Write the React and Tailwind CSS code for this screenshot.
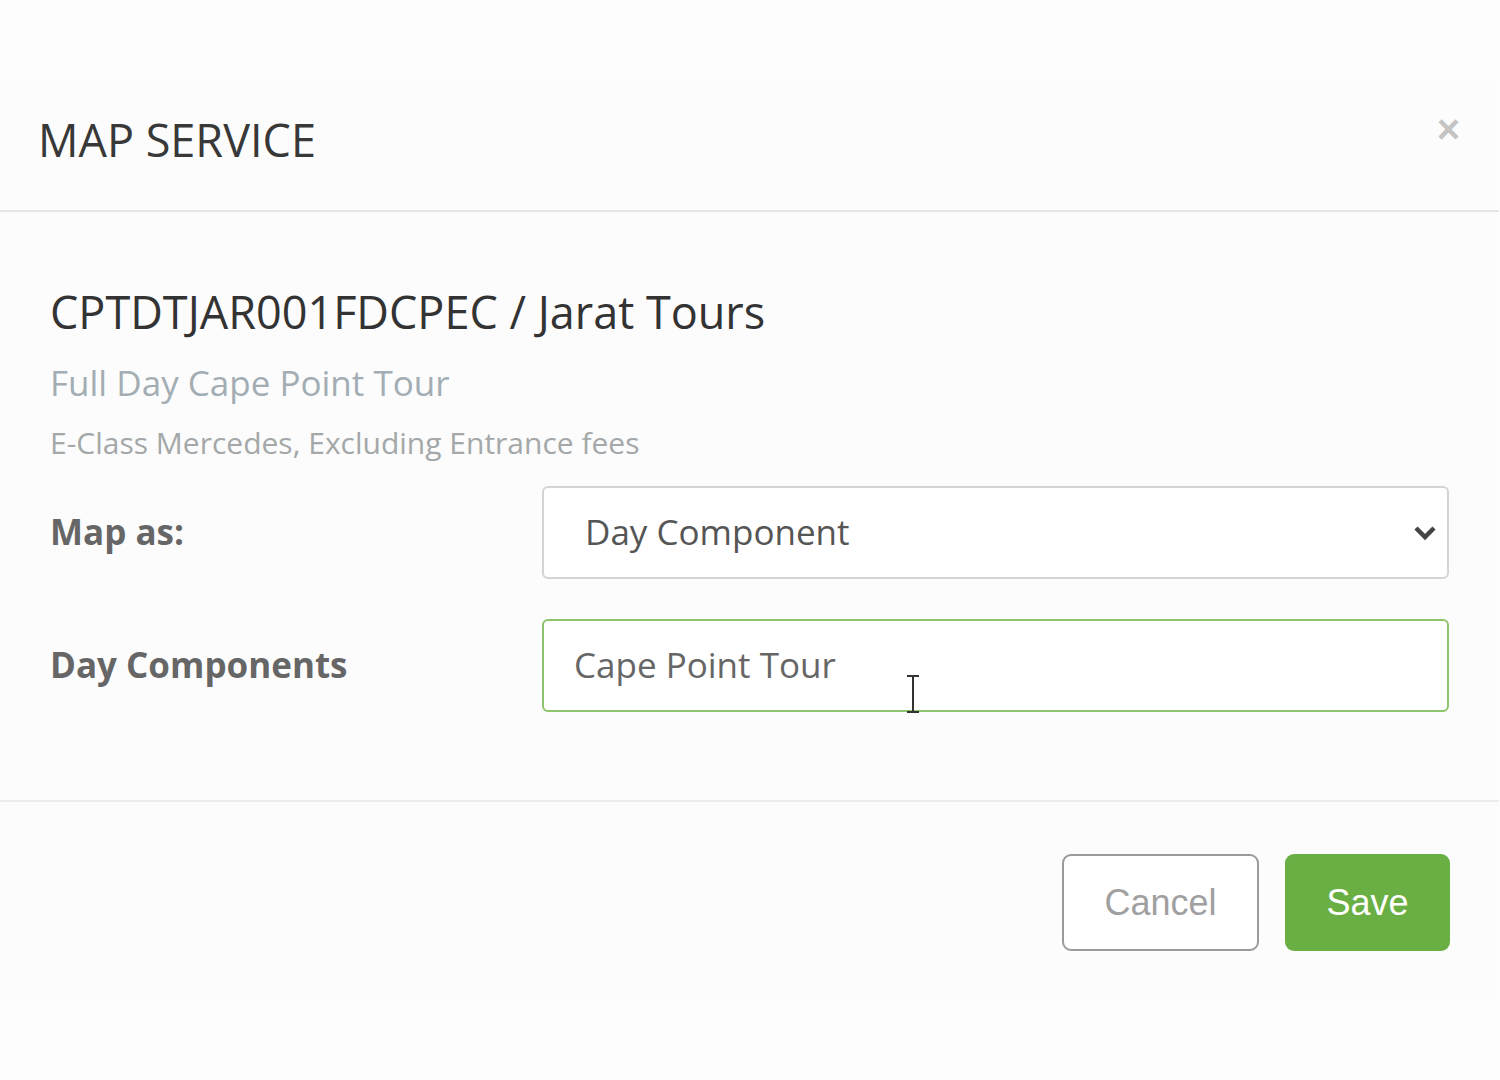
import React from 'react';

const openSans = { fontFamily: '"Open Sans", "Noto Sans", sans-serif' };

const MapServiceModal = () => {
  return (
    <div className='w-[1499px] bg-[#fcfcfc]' style={openSans}>
      <div className='h-[128px] border-b-2 border-[#e6e6e6] flex items-start justify-between pl-[38px] pr-[39px]'>
        <h2 className='pt-[33px] text-[45px] leading-none text-[#383838]'>MAP SERVICE</h2>
        <button className='pt-[25px] text-[40px] leading-none text-[#c4c4c4] font-bold' style={{ fontFamily: '"Liberation Sans", Arial, sans-serif' }}>×</button>
      </div>

      <div className='h-[590px] border-b-2 border-[#ececec] pl-[50px] pr-[50px] pt-[77px]'>
        <h3 className='text-[45px] leading-none text-[#333]'>CPTDTJAR001FDCPEC / Jarat Tours</h3>
        <p className='mt-[31px] text-[35px] leading-none text-[#a3adb4]'>Full Day Cape Point Tour</p>
        <p className='mt-[28px] text-[30px] leading-none text-[#a4a8a8]'>E-Class Mercedes, Excluding Entrance fees</p>

        <div className='mt-[28px] flex items-center'>
          <label className='w-[492px] text-[35px] font-bold text-[#666]'>Map as:</label>
          <div className='relative flex-1 h-[93px] border-2 border-[#d4d4d4] rounded-[6px] bg-white flex items-center pl-[41px]'>
            <span className='text-[35px] text-[#555]'>Day Component</span>
            <svg className='absolute right-[10px] top-[36px]' width='24' height='18' viewBox='0 0 24 18'>
              <path d='M3 4 L12 13 L21 4' fill='none' stroke='#444' strokeWidth='4.5' />
            </svg>
          </div>
        </div>

        <div className='mt-[40px] flex items-center'>
          <label className='w-[492px] text-[35px] font-bold text-[#666]'>Day Components</label>
          <div className='relative flex-1 h-[93px] border-2 border-[#8cc56c] rounded-[6px] bg-white flex items-center pl-[30px]'>
            <span className='text-[35px] text-[#666]'>Cape Point Tour</span>
            <div className='absolute left-[362px] top-[54px] w-[14px] h-[38px] flex flex-col items-center'>
              <div className='w-[12px] h-[2px] bg-[#333]'></div>
              <div className='w-[2px] flex-1 bg-[#333]'></div>
              <div className='w-[12px] h-[2px] bg-[#333]'></div>
            </div>
          </div>
        </div>
      </div>

      <div className='h-[196px] flex justify-end items-start gap-[26px] pr-[49px] pt-[52px]' style={{ fontFamily: '"Liberation Sans", Arial, sans-serif' }}>
        <button className='w-[197px] h-[97px] border-2 border-[#9a9a9a] rounded-[9px] bg-white text-[36px] text-[#a0a0a0]'>Cancel</button>
        <button className='w-[165px] h-[97px] rounded-[9px] bg-[#6aaf43] text-[36px] text-white'>Save</button>
      </div>
    </div>
  );
};

export default function App() {
  return (
    <div className='min-h-[1080px] bg-[#fdfdfd] pt-[84px]'>
      <MapServiceModal />
    </div>
  );
}
